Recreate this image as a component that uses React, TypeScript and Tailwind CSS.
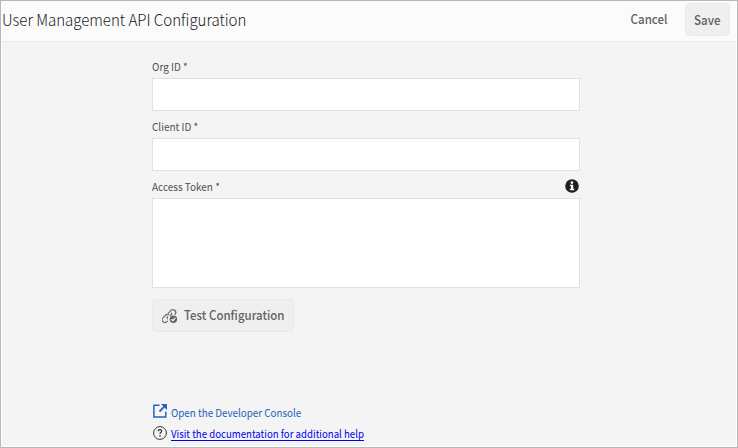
import React from 'react';

function TestIcon() {
  return (
    <svg className="h-4 w-4 shrink-0" viewBox="0 0 16 16" fill="none" stroke="#6a6a6a" strokeWidth="1.2" strokeLinecap="round">
      <path d="M6.4 5.2 L8.7 2.7 A2.9 2.9 0 0 1 13.6 5.6 L13 6.4" />
      <path d="M9.6 5.1 A2.6 2.6 0 0 1 8.4 7.6" />
      <path d="M5.6 13.2 L4.6 13.8 A2.7 2.7 0 0 1 1.2 9.6 L3.5 7.3 Q5.1 5.9 6.9 6.8" />
      <path d="M5.4 10.8 Q4.5 9.7 5.5 8.6" />
      <circle cx="11.4" cy="11.3" r="3.7" fill="#656565" stroke="none" />
      <path d="M9.7 11.5 L10.9 12.6 L13.1 10.1" stroke="#fff" strokeWidth="1.1" />
    </svg>
  );
}

function InfoIcon() {
  return (
    <svg className="-mt-[3px] h-[14px] w-[14px] shrink-0" viewBox="0 0 14 14">
      <circle cx="7" cy="7" r="6.8" fill="#202020" />
      <circle cx="6.9" cy="3.6" r="1.3" fill="#fff" />
      <path d="M5 5.7H8.2v4.1h1v1.4H4.9V9.8h1V7H5z" fill="#fff" />
    </svg>
  );
}

function Label({ children }: { children: React.ReactNode }) {
  return <label className="block h-[11px] origin-left scale-x-[0.905] whitespace-nowrap text-[11px] leading-[8px] text-[#505050]">{children}</label>;
}

export default function App() {
  return (
    <div className="h-[448px] w-[738px] overflow-hidden border border-[#b7b7b7] bg-white p-px pt-0 font-['Noto_Sans_CJK_JP','Noto_Sans_CJK_SC',sans-serif]">
      <div className="flex h-[445px] flex-col bg-[#f4f4f4]">
        <header className="flex h-[41px] shrink-0 items-start border-b border-[#eaeaea] bg-[#fbfbfb]">
          <h1 className="mt-[8px] origin-left scale-x-[0.938] whitespace-nowrap text-[16px] leading-5 font-light text-[#202020]">User Management API Configuration</h1>
          <div className="ml-auto flex items-start pr-[6px] pt-[2px] text-[12.5px] font-medium text-[#626262]">
            <button className="h-[33px] w-[72px] leading-[31px]"><span className="relative -top-px inline-block scale-x-[0.92]">Cancel</span></button>
            <button className="h-[33px] w-[45px] rounded-[4px] border border-[#eaeaea] bg-[#efefef] leading-[31px]"><span className="inline-block scale-x-[0.93]">Save</span></button>
          </div>
        </header>
        <main className="ml-[150px] flex w-[428px] flex-col">
          <div className="pt-5">
            <Label>Org ID *</Label>
            <input aria-label="Org ID" className="mt-[5px] block h-[33px] w-full border border-[#e1e1e1] bg-white" />
          </div>
          <div className="pt-[11px]">
            <Label>Client ID *</Label>
            <input aria-label="Client ID" className="mt-[5px] block h-[33px] w-full border border-[#e1e1e1] bg-white" />
          </div>
          <div className="pt-[11px]">
            <div className="flex h-[11px] items-center justify-between pr-[1px]">
              <Label>Access Token *</Label>
              <InfoIcon />
            </div>
            <textarea aria-label="Access Token" className="mt-[5px] block h-[90px] w-full resize-none border border-[#e1e1e1] bg-white" />
          </div>
          <button className="mt-[11px] flex h-[33px] w-[142px] items-center whitespace-nowrap rounded-[4px] border border-[#e9e9e9] bg-[#efefef] pl-[9px] text-[12.5px] font-medium text-[#626262]">
            <TestIcon />
            <span className="mb-[2px] ml-[6px] origin-left scale-x-[0.918] leading-[18px]">Test Configuration</span>
          </button>
          <a className="mt-[71px] flex h-[19px] items-center whitespace-nowrap text-[11px] text-[#2363bd]">
            <svg className="-mt-[3px] h-4 w-4 shrink-0" viewBox="0 0 16 16" fill="none" stroke="#2363bd" strokeWidth="1.5">
              <path d="M7.5 2.2H1.9V14H13.8V8.7" />
              <path d="M7.5 8.5L12.3 3.7" strokeWidth="1.8" />
              <path d="M9 1H15V7Z" fill="#2363bd" stroke="none" />
            </svg>
            <span className="ml-[3px] origin-left scale-x-[0.892]">Open the Developer Console</span>
          </a>
          <a className="mt-[1px] flex h-[20px] items-center whitespace-nowrap text-[11px] text-[#0000ee]">
            <svg className="h-4 w-4 shrink-0" viewBox="0 0 16 16" fill="none" stroke="#333" strokeWidth="1">
              <circle cx="8" cy="8" r="6.4" />
              <path d="M6.2 6.2Q6.3 4.7 8 4.7Q9.8 4.8 9.7 6.3Q9.6 7.1 8.6 7.7Q8 8.1 8 9" strokeWidth="1.2" />
              <circle cx="8" cy="10.8" r=".85" fill="#333" stroke="none" />
            </svg>
            <span className="mt-[2px] ml-[3px] origin-left scale-x-[0.877] border-b border-[#0000ee] leading-[13px]">Visit the documentation for additional help</span>
          </a>
        </main>
      </div>
    </div>
  );
}
